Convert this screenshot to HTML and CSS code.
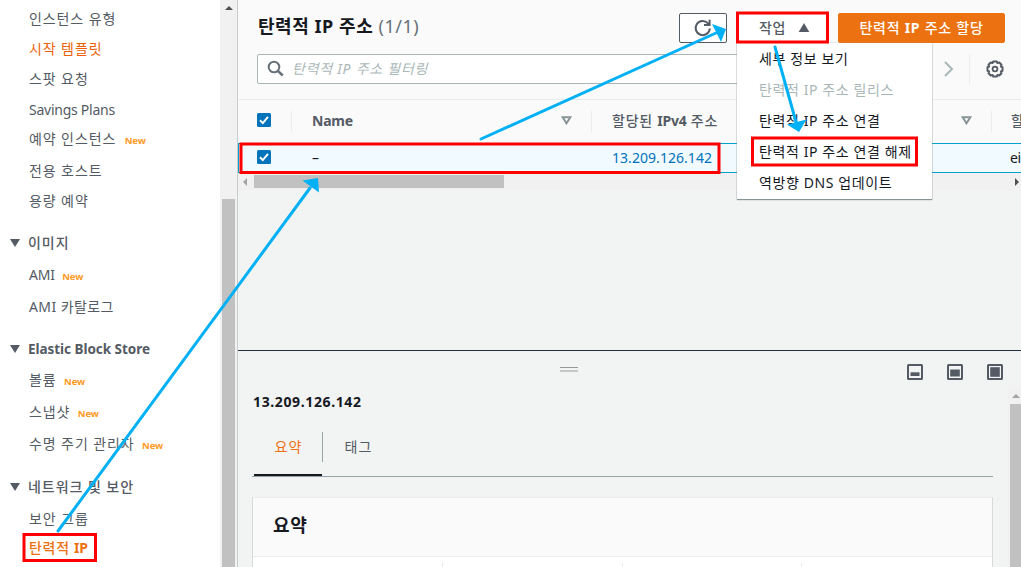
FILE: index.html
```html
<!DOCTYPE html>
<html lang="ko">
<head>
<meta charset="utf-8">
<title>탄력적 IP 주소</title>
<link rel="stylesheet" href="styles.css">
</head>
<body>
<div class="app">
  <nav class="sidebar">
    <a class="item">인스턴스 유형</a>
    <a class="item hover">시작 템플릿</a>
    <a class="item">스팟 요청</a>
    <a class="item gap1 latin">Savings Plans</a>
    <a class="item up">예약 인스턴스<span class="new">New</span></a>
    <a class="item gap2">전용 호스트</a>
    <a class="item">용량 예약</a>
    <div class="item heading"><i class="caret"></i>이미지</div>
    <a class="item gap2"><span class="latin">AMI</span><span class="new near">New</span></a>
    <a class="item gap2 mixed">AMI 카탈로그</a>
    <div class="item heading store"><i class="caret"></i>Elastic Block Store</div>
    <a class="item gap1">볼륨<span class="new near">New</span></a>
    <a class="item gap2">스냅샷<span class="new near">New</span></a>
    <a class="item gap2">수명 주기 관리자<span class="new near">New</span></a>
    <div class="item heading last"><i class="caret"></i>네트워크 및 보안</div>
    <a class="item gap2">보안 그룹</a>
    <a class="item up active">탄력적 <b>IP</b></a>
  </nav>
  <div class="side-scroll"><i class="arrow-up dark"></i><div class="side-thumb"></div></div>
  <main class="main">
    <section class="list">
      <header class="list-head">
        <h1 class="title">탄력적 IP 주소 <span class="count">(1/1)</span></h1>
        <div class="actions">
          <button class="btn refresh"><svg width="20" height="20" viewBox="0 0 20 20"><path d="M16.800 10.500A7.100 7.100 0 1 1 15 5.300l1.300 1.200" fill="none" stroke="#545b64" stroke-width="2"/><path d="M16.600 1.800v5.300h-5.600" fill="none" stroke="#545b64" stroke-width="2"/></svg></button>
          <button class="btn work">작업<svg width="12" height="10" viewBox="0 0 12 10"><path d="M6 0l5.300 9H.7z" fill="#545b64"/></svg></button>
          <button class="btn primary">탄력적 <b>IP</b> 주소 할당</button>
        </div>
      </header>
      <div class="filter">
        <div class="search"><svg width="17" height="17" viewBox="0 0 17 17" fill="none" stroke="#687078"><circle cx="7" cy="7" r="5.300" stroke-width="2"/><path d="M11 11l4.800 4.500" stroke-width="2.400"/></svg><span>탄력적 IP 주소 필터링</span></div>
        <div class="pager"><svg width="12" height="16" viewBox="0 0 12 16"><path d="M2 1l7 7-7 7" fill="none" stroke="#aab7b8" stroke-width="2"/></svg></div>
        <div class="settings"><svg width="18" height="18" viewBox="0 0 18 18" fill="none" stroke="#545b64"><path d="M7.200 1.500h3.600l.7 1.600 1.800-.6 2.200 2.200-.6 1.800 1.600.7v3.600l-1.600.7.6 1.800-2.200 2.200-1.800-.6-.7 1.600H7.200l-.7-1.600-1.800.6-2.200-2.200.6-1.800-1.600-.7V7.200l1.600-.7-.6-1.800 2.200-2.200 1.800.6z" stroke-width="2" stroke-linejoin="round"/><circle cx="9" cy="9" r="2.400" stroke-width="1.800"/></svg></div>
      </div>
      <div class="row thead">
        <div class="check"><svg width="14" height="14" viewBox="0 0 14 14"><rect width="14" height="14" rx="1.500" fill="#0073bb"/><path d="M3 7.200l2.800 2.900L11 3.800" fill="none" stroke="#fff" stroke-width="2"/></svg></div>
        <div class="cell name"><b>Name</b><svg class="sort" width="11" height="9" viewBox="0 0 11 9"><path d="M1.600 1.200h7.800L5.500 7.300z" fill="none" stroke="#879596" stroke-width="2"/></svg></div>
        <div class="cell ip">할당된 <b>IPv4</b> 주소<svg class="sort" width="11" height="9" viewBox="0 0 11 9"><path d="M1.600 1.200h7.800L5.500 7.300z" fill="none" stroke="#879596" stroke-width="2"/></svg></div>
        <div class="cell extra">할</div>
      </div>
      <div class="row selected">
        <div class="check"><svg width="14" height="14" viewBox="0 0 14 14"><rect width="14" height="14" rx="1.500" fill="#0073bb"/><path d="M3 7.200l2.800 2.900L11 3.800" fill="none" stroke="#fff" stroke-width="2"/></svg></div>
        <div class="cell name">–</div>
        <div class="cell ip link">13.209.126.142</div>
        <div class="cell extra">ei</div>
      </div>
      <div class="hscroll"><i class="arrow-left"></i><div class="hthumb"></div><i class="arrow-right"></i></div>
      <div class="menu">
        <a>세부 정보 보기</a>
        <a class="disabled">탄력적 IP 주소 릴리스</a>
        <a>탄력적 IP 주소 연결</a>
        <a>탄력적 IP 주소 연결 해제</a>
        <a>역방향 DNS 업데이트</a>
      </div>
    </section>
    <section class="detail">
      <div class="split-bar">
        <div class="grip"></div>
        <div class="layouts">
          <svg width="16" height="16" viewBox="0 0 16 16"><rect x="1" y="1" width="14" height="14" rx=".5" fill="none" stroke="#545b64" stroke-width="2"/><path d="M3.500 8.300h9V12h-9z" fill="#545b64"/></svg>
          <svg width="16" height="16" viewBox="0 0 16 16"><rect x="1" y="1" width="14" height="14" rx=".5" fill="none" stroke="#545b64" stroke-width="2"/><path d="M3.200 5.500h9.600v7H3.200z" fill="#545b64"/></svg>
          <svg width="16" height="16" viewBox="0 0 16 16"><rect x="1" y="1" width="14" height="14" rx=".5" fill="none" stroke="#545b64" stroke-width="2"/><path d="M3.200 3.200h9.600v9.600H3.200z" fill="#545b64"/></svg>
        </div>
      </div>
      <div class="detail-body">
        <div class="content">
          <h2 class="address">13.209.126.142</h2>
          <div class="tabs"><div class="tab on"><span>요약</span></div><div class="tab">태그</div></div>
          <div class="card">
            <h3>요약</h3>
            <div class="columns"><i></i><i></i><i></i><i></i></div>
          </div>
        </div>
        <div class="detail-scroll"><i class="arrow-up"></i><div class="detail-thumb"></div></div>
      </div>
    </section>
  </main>
  <svg class="marks" width="1021" height="567" viewBox="0 0 1021 567">
    <g fill="none" stroke="#f00" stroke-width="3">
      <rect x="24" y="534.500" width="71.500" height="26"/>
      <rect x="241" y="144" width="478" height="28.500"/>
      <rect x="737.500" y="13" width="90" height="29"/>
      <rect x="752.500" y="138" width="164" height="27"/>
    </g>
    <g fill="none" stroke="#00b0f5" stroke-width="3" stroke-linecap="round">
      <path d="M58 531L310 188"/><path d="M481 139L716 33"/><path d="M775 47L796 122"/>
    </g>
    <g fill="#00b0f5"><path d="M318 178l-15.500 2.500 16.500 12z"/><path d="M726 29l-14-5 9 18z"/><path d="M799 132l-12-7.500 19.500-5z"/></g>
  </svg>
</div>
</body>
</html>
```
FILE: styles.css
```css
* { box-sizing: border-box; }
body { margin: 0; font-family: "Noto Sans", "Noto Sans CJK KR", sans-serif; font-size: 14px; color: #16191f; }
.app { position: relative; display: flex; width: 1021px; height: 567px; overflow: hidden; background: #f2f3f3; }
h1, h2, h3 { margin: 0; }

.sidebar { width: 220px; flex: none; padding: 4px 0 0 29px; background: #fff; color: #545b64; display: flex; flex-direction: column; }
.item { height: 30px; flex: none; display: flex; align-items: center; white-space: pre; font-size: 14px; letter-spacing: .9px; line-height: 30px; }
.latin { letter-spacing: -.25px; }
.mixed { letter-spacing: .4px; }
.gap1 { margin-top: 1px; }
.gap2 { margin-top: 2px; }
.up { margin-top: -1px; }
.hover { color: #eb5f07; }
.active { color: #ec7211; font-weight: 500; letter-spacing: .7px; }
.active b { letter-spacing: -.3px; }
.heading { margin: 12px 0 0 -19px; font-weight: 500; letter-spacing: .95px; }
.heading.store { font-weight: 700; font-size: 13.5px; letter-spacing: -.04px; }
.heading.last { margin-top: 13px; }
.caret { margin-right: 8px; border: solid transparent; border-width: 8px 5px 0; border-top-color: #545b64; }
.new { margin: 4px 0 0 8.5px; color: #ff9925; font-size: 9.5px; font-weight: 700; letter-spacing: -.1px; }
.new.near { margin-left: 7.5px; }

.side-scroll { width: 17px; flex: none; padding: 6px 2px 0; background: #f1f1f1; display: flex; flex-direction: column; align-items: center; }
.arrow-up { flex: none; border: solid transparent; border-width: 0 4px 4px; border-bottom-color: #a3a3a3; }
.arrow-up.dark { border-bottom-color: #505050; }
.side-thumb { width: 13px; flex: 1; margin-top: 189px; background: #c1c1c1; }

.main { width: 784px; flex: none; border-left: 1px solid #c8cccd; display: flex; flex-direction: column; }
.list { position: relative; height: 350px; }
.list-head { height: 54px; padding: 13px 16px 0 20px; display: flex; justify-content: space-between; background: #fafafa; }
.title { font-size: 18px; line-height: 27px; letter-spacing: .55px; white-space: nowrap; }
.count { font-weight: 400; color: #687078; letter-spacing: .5px; }
.actions { display: flex; }
.btn { height: 30px; padding: 0; border: 1px solid #545b64; border-radius: 2px; background: #fff; color: #545b64; font: 500 14px/28px "Noto Sans", "Noto Sans CJK KR", sans-serif; display: flex; align-items: center; justify-content: center; white-space: pre; }
.refresh { width: 48px; margin-right: 9px; }
.work { width: 92px; margin-right: 10px; gap: 12px; padding-left: 5px; letter-spacing: .6px; }
.primary { width: 167px; border-color: #ec7211; background: #ec7211; color: #fff; letter-spacing: .75px; }
.filter { height: 46px; padding-left: 19px; display: flex; background: #fafafa; border-bottom: 1px solid #eaeded; }
.search { width: 590px; height: 30px; padding-left: 9px; border: 1px solid #aab7b8; border-radius: 2px; background: #fff; display: flex; align-items: center; gap: 8px; color: #aab7b8; font-style: italic; letter-spacing: .75px; line-height: 26px; padding-bottom: 1px; }
.pager { width: 123px; height: 30px; padding-left: 96px; border-right: 1px solid #eaeded; display: flex; align-items: center; }
.settings { padding: 6px 0 0 16px; }
.row { display: flex; align-items: center; background: #fafafa; }
.thead { height: 43px; color: #545b64; font-weight: 500; }
.check { width: 54px; padding-left: 19px; padding-bottom: 3px; display: flex; border-right: 1px solid #eaeded; height: 21px; align-items: center; }
.cell { height: 21px; line-height: 19px; padding-bottom: 2px; display: flex; align-items: center; border-right: 1px solid #eaeded; white-space: pre; }
.cell.name { width: 300px; padding-left: 20px; padding-right: 19px; }
.cell.ip { width: 400px; padding-left: 20px; padding-right: 19px; }
.cell.extra { width: 29px; padding-left: 19px; border: 0; }
.thead .ip { letter-spacing: .75px; }
.thead .cell b { letter-spacing: -.25px; }
.sort { margin-left: auto; }
.selected { height: 30px; background: #f1faff; border: solid #00a1c9; border-width: 1px 0 1px 1px; }
.selected .check { padding-left: 18px; width: 53px; }
.selected .check, .selected .cell { border-color: transparent; }
.selected .cell { padding-bottom: 1px; }
.selected .extra { padding-left: 18px; letter-spacing: -.3px; }
.link { color: #0073bb; letter-spacing: .05px; }
.hscroll { height: 17px; padding: 0 0 0 5px; display: flex; align-items: center; background: #f1f1f1; }
.hthumb { width: 250px; height: 13px; margin-left: 7px; background: #c1c1c1; }
.arrow-left { border: solid transparent; border-width: 4px 4px 4px 0; border-right-color: #a3a3a3; }
.arrow-right { margin: 0 2px 0 auto; border: solid transparent; border-width: 4px 0 4px 4px; border-left-color: #505050; }
.menu { position: absolute; left: 499px; top: 43px; width: 195px; height: 156px; background: #fff; box-shadow: 0 1px 1px #879596, 0 0 1px #879596; }
.menu a { display: block; padding-left: 22px; height: 31px; line-height: 31px; white-space: nowrap; letter-spacing: .6px; }
.menu .disabled { color: #aab7b8; }

.detail { height: 217px; border-top: 1px solid #232f3e; display: flex; flex-direction: column; }
.split-bar { height: 36px; flex: none; padding: 13px 18px 0 322px; display: flex; justify-content: space-between; }
.grip { width: 18px; height: 5px; margin-top: 3px; border-top: 1px solid #999; border-bottom: 2px solid #c5c8c9; }
.layouts { display: flex; gap: 24px; }
.detail-body { display: flex; flex: 1; min-height: 0; }
.content { width: 741px; margin-left: 14px; }
.address { padding-top: 4px; padding-left: 1px; font-size: 14px; line-height: 22px; letter-spacing: .62px; }
.tabs { height: 63px; margin-top: 1px; display: flex; border-bottom: 1px solid #95a5a6; padding: 18px 0 0 2px; }
.tab { width: 71px; height: 30px; text-align: center; line-height: 29px; color: #545b64; letter-spacing: 1px; }
.tab.on { width: 69px; height: 44px; color: #ec7211; background: linear-gradient(#95a5a6, #95a5a6) right top / 1px 30px no-repeat, linear-gradient(#16191f, #16191f) left bottom / 68px 2px no-repeat; }
.card { margin-top: 20px; height: 72px; background: #fff; border: 1px solid #d5dbdb; border-top-color: #eaeded; border-bottom: 0; }
.card h3 { height: 59px; padding: 14px 20px; background: #fafafa; border-bottom: 1px solid #eaeded; font-size: 18px; line-height: 26px; letter-spacing: .7px; }
.columns { display: grid; grid-template-columns: 190px 180px 179px 1fr; height: 12px; padding-top: 5px; }
.columns i { border-right: 1px solid #eaeded; }
.columns i:last-child { border: 0; }
.detail-scroll { width: 13px; margin: 0 0 0 15px; padding: 7px 0 0 2px; background: #f1f1f1; overflow: hidden; }
.detail-scroll .arrow-up { display: block; width: 8px; margin-left: 2px; }
.detail-thumb { height: 180px; margin-top: 6px; background: #c1c1c1; }

/* Annotation boxes and arrows drawn over the console */
.marks { position: absolute; left: 0; top: 0; pointer-events: none; }
```
